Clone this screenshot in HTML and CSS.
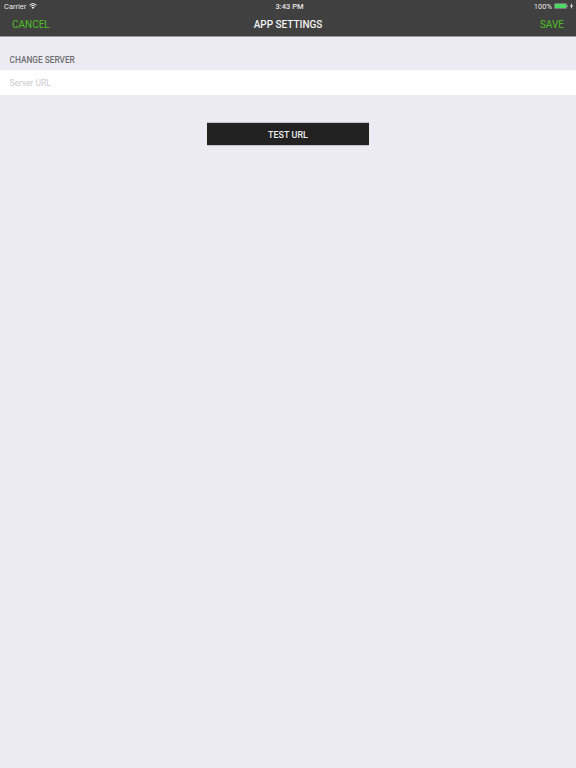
FILE: index.html
```html
<!DOCTYPE html>
<html lang="en">
<head>
    <meta charset="UTF-8">
    <title>App Settings</title>
    <link rel="stylesheet" href="styles.css">
</head>
<body>
    <div class="top">
        <div class="status">
            <div class="status-left">
                <span>Carrier</span>
                <svg class="wifi" width="8" height="6" viewBox="0 0 16 12" fill="none" stroke="#f2f2f2" stroke-width="2">
                    <path d="M1 4.2 C5 0.4 11 0.4 15 4.2"/>
                    <path d="M3.4 6.8 C6 4.4 10 4.4 12.6 6.8"/>
                    <path d="M8 11.8 L5.2 8.8 C7 7.6 9 7.6 10.8 8.8 Z" fill="#f2f2f2" stroke="none"/>
                </svg>
            </div>
            <div class="status-time">3:43 PM</div>
            <div class="status-right">
                <span>100%</span>
                <span class="battery"><span class="battery-fill"></span></span>
                <span class="battery-tip"></span>
                <svg class="bolt" width="3" height="6" viewBox="0 0 6 12">
                    <path d="M4 0 L0 7 L2.5 7 L2 12 L6 5 L3.5 5 Z" fill="#f2f2f2"/>
                </svg>
            </div>
        </div>
        <div class="nav">
            <a class="nav-btn" href="#">CANCEL</a>
            <h1>APP SETTINGS</h1>
            <a class="nav-btn" href="#">SAVE</a>
        </div>
    </div>
    <div class="section-title">CHANGE SERVER</div>
    <div class="field">
        <input type="text" placeholder="Server URL">
    </div>
    <div class="actions">
        <button class="test-btn">TEST URL</button>
    </div>
</body>
</html>
```

FILE: styles.css
```css
*{
    margin: 0;
    padding: 0;
    box-sizing: border-box;
}
body{
    width: 576px;
    height: 768px;
    overflow: hidden;
    background: #ebebf1;
    font-family: "Roboto", "Liberation Sans", sans-serif;
}
a{
    text-decoration: none;
}
.top{
    height: 37px;
    background: #404040;
    border-bottom: 1px solid #9a9a9a;
}
.status{
    height: 12px;
    display: grid;
    grid-template-columns: 1fr auto 1fr;
    align-items: center;
    padding: 0 3px 0 4px;
    color: #e8e8e8;
    font-size: 7.5px;
}
.status-left{
    display: flex;
    align-items: center;
    gap: 3px;
}
.status-time{
    font-weight: 500;
    padding-left: 2px;
}
.status-right{
    display: flex;
    align-items: center;
    justify-content: flex-end;
}
.battery{
    width: 13px;
    height: 6px;
    margin-left: 2px;
    padding: 1px;
    background: #777;
    border-radius: 1px;
    display: flex;
}
.battery-fill{
    flex: 1;
    background: #4cd964;
}
.battery-tip{
    width: 1px;
    height: 2px;
    background: #8a8a8a;
    margin-right: 2px;
}
.nav{
    height: 24px;
    display: flex;
    align-items: center;
    justify-content: space-between;
    padding: 0 12px;
    position: relative;
}
.nav h1{
    position: absolute;
    left: 0;
    right: 0;
    text-align: center;
    font-size: 10px;
    font-weight: 500;
    color: #f4f4f4;
}
.nav-btn{
    font-size: 10px;
    color: #4cc021;
}
.section-title{
    padding: 18px 10px 0 9.5px;
    height: 33px;
    font-size: 8.3px;
    font-weight: 500;
    line-height: 10px;
    color: #6d6d72;
}
.field{
    height: 25px;
    background: #fff;
    padding: 0 9.5px;
    display: flex;
    align-items: center;
}
.field input{
    width: 100%;
    border: none;
    outline: none;
    background: transparent;
    font-family: inherit;
    font-size: 8.5px;
}
.field input::placeholder{
    color: #c9c9ce;
}
.actions{
    padding-top: 27px;
    display: flex;
    justify-content: center;
}
.test-btn{
    width: 162px;
    height: 24px;
    padding-top: 1px;
    background: #222;
    border: none;
    border-top: 1px solid #c4c4cc;
    border-bottom: 1px solid #c4c4cc;
    color: #eee;
    font-family: inherit;
    font-size: 9px;
    font-weight: 500;
}
```
